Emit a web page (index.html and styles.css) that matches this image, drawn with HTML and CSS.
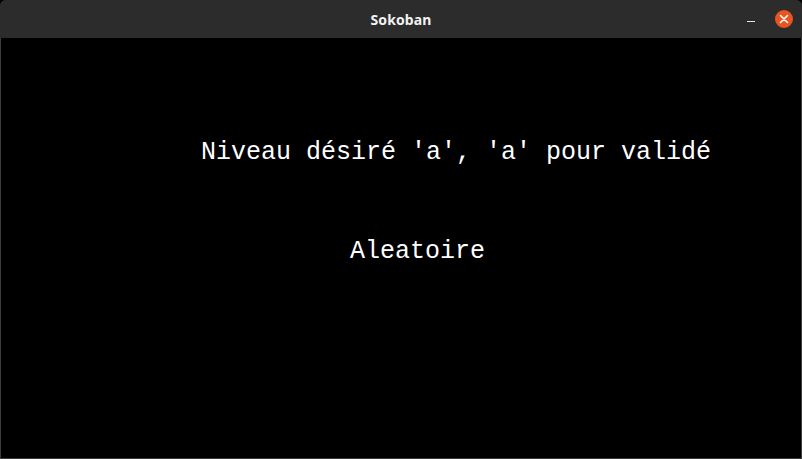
FILE: index.html
```html
<!DOCTYPE html>
<html lang="fr">
<head>
<meta charset="utf-8">
<title>Sokoban</title>
<link rel="stylesheet" href="styles.css">
</head>
<body>
<div class="window">
  <header class="titlebar">
    <span class="title">Sokoban</span>
    <div class="controls">
      <span class="minimize"></span>
      <span class="close">
        <svg width="18" height="18" viewBox="0 0 18 18"><path d="M5.5 5.5 L12.5 12.5 M12.5 5.5 L5.5 12.5" stroke="#fff" stroke-width="1.6" stroke-linecap="round"/></svg>
      </span>
    </div>
  </header>
  <main class="screen">
    <p class="line line-prompt">Niveau désiré 'a', 'a' pour validé</p>
    <p class="line line-value">Aleatoire</p>
  </main>
</div>
</body>
</html>
```
FILE: styles.css
```css
html, body {
  margin: 0;
  padding: 0;
  background: #000;
}
.window {
  width: 802px;
  height: 459px;
  display: flex;
  flex-direction: column;
  background: #2b2b2b;
  border-radius: 6px 6px 0 0;
  overflow: hidden;
}
.titlebar {
  height: 38px;
  flex: 0 0 38px;
  position: relative;
  display: flex;
  align-items: center;
  justify-content: center;
  background: #2c2c2c;
}
.title {
  font-family: "Noto Sans", "DejaVu Sans", sans-serif;
  font-weight: 700;
  font-size: 14px;
  color: #f2f2f2;
  letter-spacing: 0.1px;
}
.controls {
  position: absolute;
  right: 9px;
  top: 10px;
  display: flex;
  align-items: center;
  gap: 20px;
}
.minimize {
  width: 8px;
  height: 1px;
  background: #e6e6e6;
  margin-top: 4px;
}
.close {
  width: 18px;
  height: 18px;
  border-radius: 50%;
  background: #e95420;
  display: flex;
}
.screen {
  flex: 1;
  background: #000;
  border: 1px solid #3c3c3c;
  border-top: 0;
  padding-top: 100px;
}
.line {
  margin: 0;
  font-family: "Courier New", "Nimbus Mono PS", "FreeMono", "Liberation Mono", monospace;
  font-size: 25px;
  line-height: 30px;
  color: #fff;
  white-space: pre;
}
.line-prompt {
  padding-left: 200px;
}
.line-value {
  margin-top: 69px;
  padding-left: 349px;
}
```
